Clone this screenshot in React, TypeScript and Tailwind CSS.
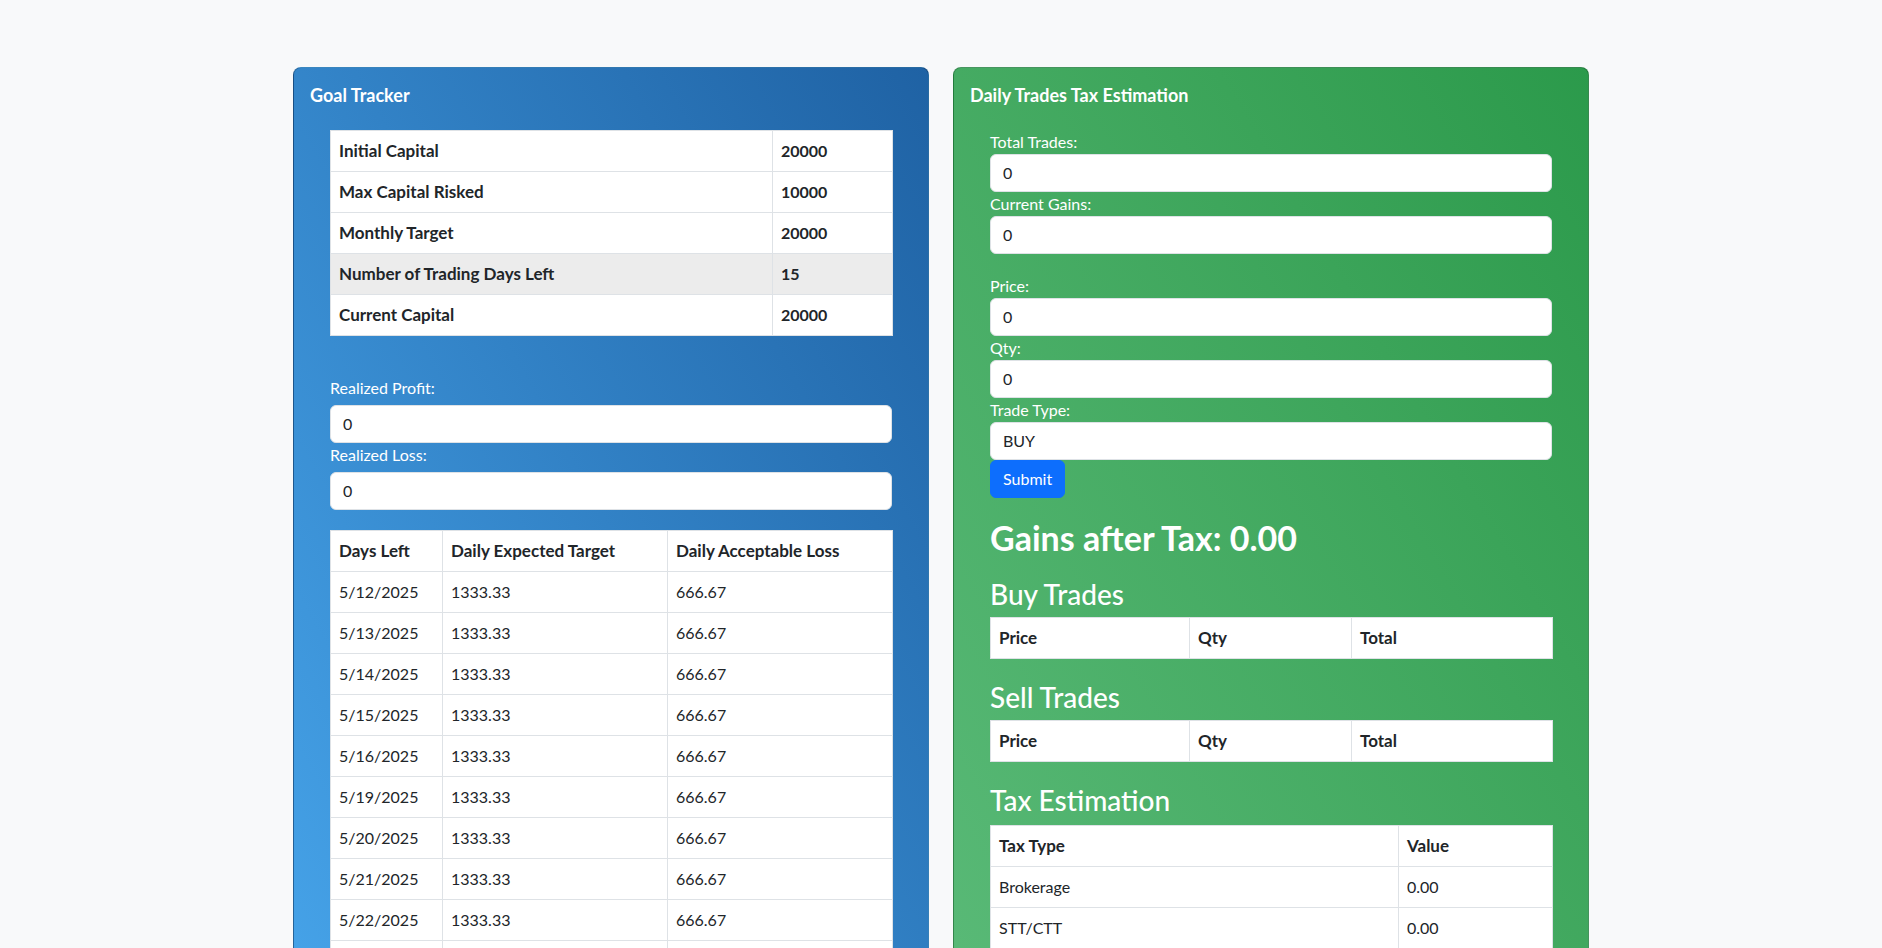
import React from "react";

const FONT = "font-['Lato','Noto_Sans','Liberation_Sans',sans-serif]";

const summary: [string, string, boolean][] = [
  ["Initial Capital", "20000", false],
  ["Max Capital Risked", "10000", false],
  ["Monthly Target", "20000", false],
  ["Number of Trading Days Left", "15", true],
  ["Current Capital", "20000", false],
];

const days = [
  "5/12/2025",
  "5/13/2025",
  "5/14/2025",
  "5/15/2025",
  "5/16/2025",
  "5/19/2025",
  "5/20/2025",
  "5/21/2025",
  "5/22/2025",
  "5/23/2025",
  "5/26/2025",
  "5/27/2025",
  "5/28/2025",
  "5/29/2025",
  "5/30/2025",
];

const taxes = [
  "Brokerage",
  "STT/CTT",
  "Exchange Transaction Charges",
  "GST",
  "SEBI Charges",
  "Stamp Duty",
];

const td = "border border-[#dee2e6] px-2 py-2 leading-6 text-left align-top text-base";
const th = "border border-[#dee2e6] px-2 py-2 leading-6 text-left align-top text-[17px] font-bold";

function Field({ label, value, mb = "mb-0" }: { label: string; value: string; mb?: string }) {
  return (
    <div className="flex flex-col">
      <label className={`text-base leading-6 text-white ${mb}`}>{label}</label>
      <div className="h-[38px] w-full rounded-md border border-[#dee2e6] bg-white px-3 py-[6px] text-base leading-6 text-[#212529]">
        {value}
      </div>
    </div>
  );
}

function TradeTable() {
  return (
    <table className="mt-[6px] w-[562px] table-fixed border-collapse bg-white text-[#212529]">
      <colgroup>
        <col className="w-[199px]" />
        <col className="w-[162px]" />
        <col className="w-[201px]" />
      </colgroup>
      <thead>
        <tr>
          <th className={th}>Price</th>
          <th className={th}>Qty</th>
          <th className={th}>Total</th>
        </tr>
      </thead>
    </table>
  );
}

export default function App() {
  return (
    <div className={`min-h-screen bg-[#f8f9fa] ${FONT}`}>
      <div className="mx-auto flex w-[1296px] items-start gap-[24px] pt-[67px] pb-12">
        {/* Goal Tracker */}
        <div className="w-[636px] rounded-lg border border-black/20 bg-gradient-to-tr from-[#4aaaf0] to-[#1f62a4] pb-4 text-white">
          <div className="px-4 pt-[15px] text-[18px] font-bold leading-6">Goal Tracker</div>
          <div className="px-[36px]">
            <table className="mt-[23px] w-[562px] table-fixed border-collapse bg-white text-[#212529]">
              <colgroup>
                <col className="w-[442px]" />
                <col className="w-[120px]" />
              </colgroup>
              <tbody>
                {summary.map(([k, v, active]) => (
                  <tr key={k} className={active ? "bg-[#ececec]" : ""}>
                    <td className={th}>{k}</td>
                    <td className={`${td} font-bold`}>{v}</td>
                  </tr>
                ))}
              </tbody>
            </table>

            <div className="mt-[40px]">
              <Field label="Realized Profit:" value="0" mb="mb-[5px]" />
              <Field label="Realized Loss:" value="0" mb="mb-[5px]" />
            </div>

            <table className="mt-[20px] w-[562px] table-fixed border-collapse bg-white text-[#212529]">
              <colgroup>
                <col className="w-[112px]" />
                <col className="w-[225px]" />
                <col className="w-[225px]" />
              </colgroup>
              <thead>
                <tr>
                  <th className={th}>Days Left</th>
                  <th className={th}>Daily Expected Target</th>
                  <th className={th}>Daily Acceptable Loss</th>
                </tr>
              </thead>
              <tbody>
                {days.map((d) => (
                  <tr key={d}>
                    <td className={td}>{d}</td>
                    <td className={td}>1333.33</td>
                    <td className={td}>666.67</td>
                  </tr>
                ))}
              </tbody>
            </table>
          </div>
        </div>

        {/* Daily Trades Tax Estimation */}
        <div className="w-[636px] rounded-lg border border-black/20 bg-gradient-to-tr from-[#5cbc7a] to-[#2b9a4b] pb-4 text-white">
          <div className="px-4 pt-[15px] text-[18px] font-bold leading-6">Daily Trades Tax Estimation</div>
          <div className="px-[36px]">
            <div className="mt-[23px]">
              <Field label="Total Trades:" value="0" />
              <Field label="Current Gains:" value="0" />
            </div>
            <div className="mt-[20px]">
              <Field label="Price:" value="0" />
              <Field label="Qty:" value="0" />
              <Field label="Trade Type:" value="BUY" />
              <button className="h-[38px] rounded-md border border-[#0d6efd] bg-[#0d6efd] px-3 text-base leading-6 text-white">
                Submit
              </button>
            </div>

            <h2 className="mt-[21px] text-[34px] font-bold leading-[38px]">Gains after Tax: 0.00</h2>

            <h3 className="mt-[20px] text-[28px] font-medium leading-[34px]">Buy Trades</h3>
            <TradeTable />

            <h3 className="mt-[21px] text-[28px] font-medium leading-[34px]">Sell Trades</h3>
            <TradeTable />

            <h3 className="mt-[21px] text-[28px] font-medium leading-[34px]">Tax Estimation</h3>
            <table className="mt-[8px] w-[562px] table-fixed border-collapse bg-white text-[#212529]">
              <colgroup>
                <col className="w-[408px]" />
                <col className="w-[154px]" />
              </colgroup>
              <thead>
                <tr>
                  <th className={th}>Tax Type</th>
                  <th className={th}>Value</th>
                </tr>
              </thead>
              <tbody>
                {taxes.map((t) => (
                  <tr key={t}>
                    <td className={td}>{t}</td>
                    <td className={td}>0.00</td>
                  </tr>
                ))}
              </tbody>
            </table>
          </div>
        </div>
      </div>
    </div>
  );
}
